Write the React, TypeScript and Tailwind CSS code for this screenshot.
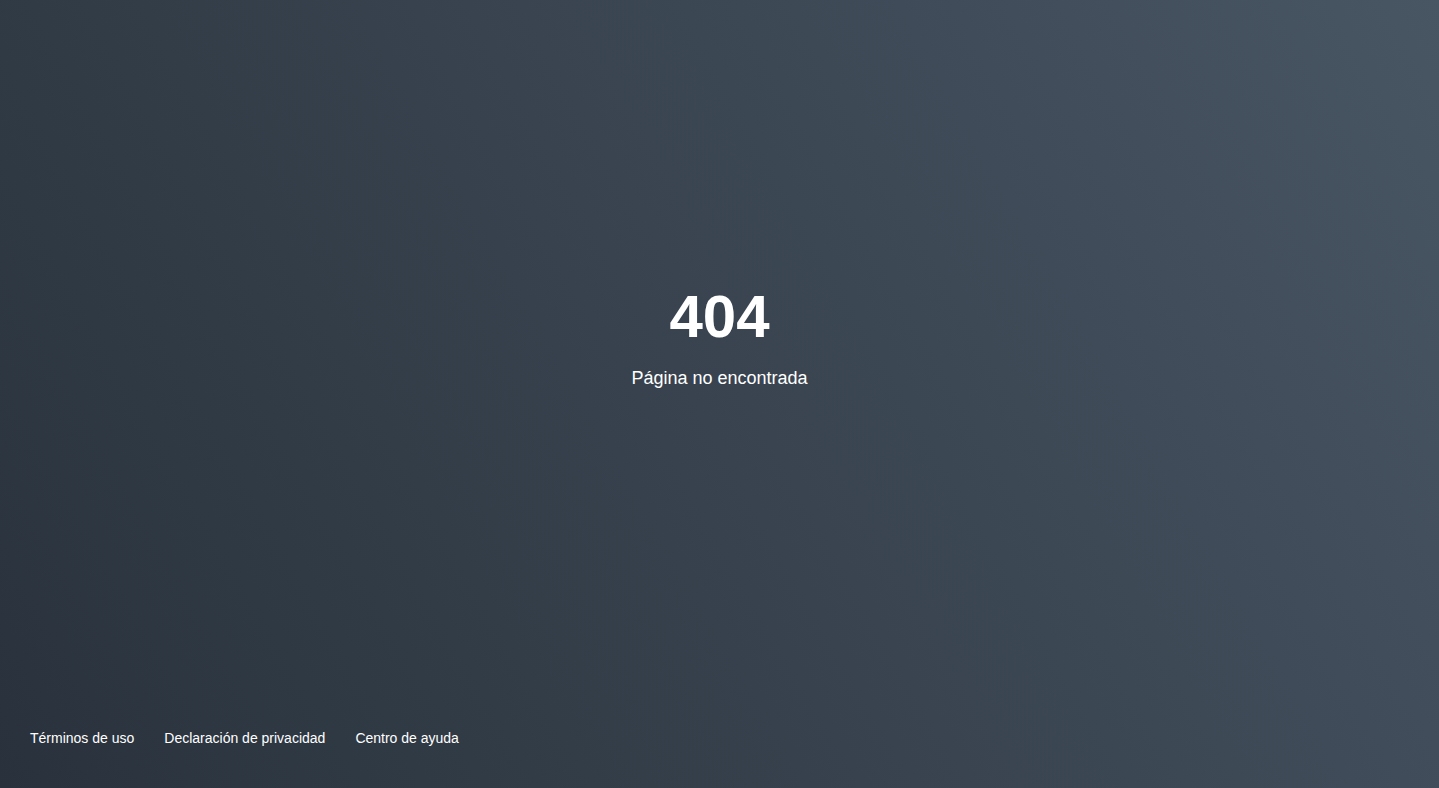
export default function App() {
  return (
    <div className="flex min-h-screen flex-col bg-[linear-gradient(60deg,#29323c_0%,#485563_100%)] font-['Liberation_Sans',Arial,sans-serif] text-white">
      {/* contenido */}
      <main className="flex flex-1 items-center justify-center pb-[50px]">
        <div className="flex flex-col items-center">
          <h1 className="text-6xl font-bold">404</h1>
          <p className="mt-[17px] text-lg">Página no encontrada</p>
        </div>
      </main>

      {/* pie */}
      <footer className="flex items-center gap-[30px] px-[30px] pb-[40px] text-sm">
        <a href="#">Términos de uso</a>
        <a href="#">Declaración de privacidad</a>
        <a href="#">Centro de ayuda</a>
      </footer>
    </div>
  );
}
